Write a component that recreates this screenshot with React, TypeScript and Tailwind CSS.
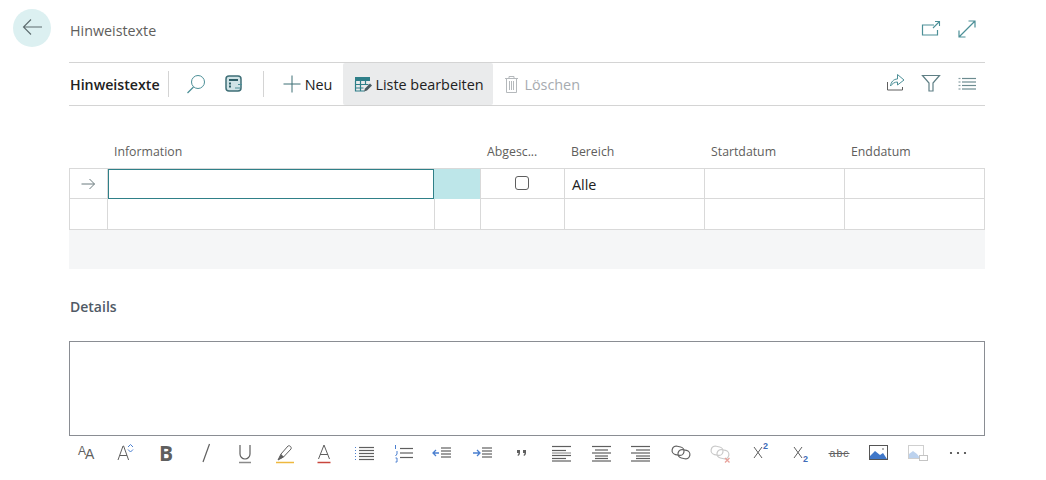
import type { ReactNode } from "react";

const teal = "#4c8f97";
const grey = "#5f5f5f";
const blue = "#4a7fd0";

function Ico({ w = 24, h = 24, children }: { w?: number; h?: number; children: ReactNode }) {
  return (
    <svg width={w} height={h} viewBox={`0 0 ${w} ${h}`} fill="none" strokeWidth="1" className="shrink-0">
      {children}
    </svg>
  );
}

function Lines({ x, w, ys, color = grey, width = 1.2 }: { x: number; w: number; ys: number[]; color?: string; width?: number }) {
  return (
    <>
      {ys.map((y) => (
        <path key={y} d={`M${x} ${y}h${w}`} stroke={color} strokeWidth={width} />
      ))}
    </>
  );
}

function LinkRings({ color }: { color: string }) {
  return (
    <>
      <rect x="3" y="5.500" width="12" height="8.500" rx="4.250" stroke={color} strokeWidth="1.200" transform="rotate(12 9 10)" />
      <rect x="9" y="9" width="12" height="8.500" rx="4.250" stroke={color} strokeWidth="1.200" transform="rotate(12 15 13)" />
    </>
  );
}

const editorIcons: ReactNode[] = [
  <Ico>
    <text x="3" y="14" fontSize="12" fontFamily="Liberation Sans, sans-serif" fill={grey}>A</text>
    <text x="10" y="18" fontSize="14" fontFamily="Liberation Sans, sans-serif" fill={grey}>A</text>
  </Ico>,
  <Ico>
    <path d="M4 19l5-14h.6l5 14M6 14.500h7" stroke={grey} />
    <path d="M14 6l2.500-2.500L19 6M14 8.500l2.500 2.500L19 8.500" stroke={blue} />
  </Ico>,
  <span className="text-[21px] font-bold leading-[24px] text-[#5f5f5f]">B</span>,
  <Ico>
    <path d="M15.500 3L9 21" stroke={grey} strokeWidth="1.200" />
  </Ico>,
  <Ico>
    <path d="M7 4v9a5 5 0 0 0 10 0V4" stroke={grey} strokeWidth="1.200" />
    <path d="M6 21.500h12" stroke="#8a8a8a" strokeWidth="1.500" />
  </Ico>,
  <Ico>
    <path d="M5 19l3-6 7-8c1.500-1 4 1 3 3l-7.500 8z" stroke={grey} />
    <path d="M5 19l3-6 3 3z" fill={grey} />
    <path d="M3 21.500h18" stroke="#eeb83f" strokeWidth="1.500" />
  </Ico>,
  <Ico>
    <path d="M6.500 18L12 4l5.500 14M8 13.500h8" stroke={grey} />
    <path d="M5.500 21.500h13" stroke="#c8463c" strokeWidth="1.500" />
  </Ico>,
  <Ico>
    <Lines x={7} w={15} ys={[6.500, 9.500, 12.500, 15.500, 18.500]} />
    <path d="M3.500 6v13" stroke={blue} strokeDasharray="1 2" />
  </Ico>,
  <Ico>
    <Lines x={8} w={13} ys={[7.500, 12, 16.500]} />
    <path d="M3.500 4v4M5 10v3l-1.500 2M3.500 17h1.500v4h-1.500" stroke={blue} />
  </Ico>,
  <Ico>
    <path d="M8 12H2M5 9l-3 3 3 3" stroke={blue} strokeWidth="1.300" />
    <Lines x={10} w={10} ys={[7, 10, 13, 16]} />
  </Ico>,
  <Ico>
    <path d="M2 12h6M6 9l3 3-3 3" stroke={blue} strokeWidth="1.300" />
    <Lines x={11} w={10} ys={[7, 10, 13, 16]} />
  </Ico>,
  <Ico>
    <path d="M7 9h3v3c0 1.500-1 2.500-2 3l-.500-1c.7-.5 1-1 1-2H7zM13 9h3v3c0 1.500-1 2.500-2 3l-.500-1c.7-.5 1-1 1-2h-1.500z" fill={grey} />
  </Ico>,
  <Ico>
    <Lines x={2} w={19} ys={[5.500, 14.500, 20]} />
    <Lines x={2} w={14} ys={[9.500, 17.500]} />
    <Lines x={2} w={19} ys={[12]} width={0.8} />
  </Ico>,
  <Ico>
    <Lines x={2} w={19} ys={[5.500, 12, 20]} />
    <Lines x={5} w={13} ys={[9, 15, 17.500]} />
  </Ico>,
  <Ico>
    <Lines x={2} w={19} ys={[5.500, 12, 20]} />
    <Lines x={7} w={14} ys={[9, 15, 17.500]} />
  </Ico>,
  <Ico>
    <LinkRings color={grey} />
  </Ico>,
  <Ico>
    <LinkRings color="#c9c9c9" />
    <path d="M17 17l4.500 4.500M21.500 17L17 21.500" stroke="#e8a29b" strokeWidth="1.300" />
  </Ico>,
  <Ico>
    <path d="M6 6l8 11M14 6L6 17" stroke={grey} />
    <text x="15" y="8" fontSize="9" fontWeight="700" fontFamily="Liberation Sans, sans-serif" fill="#3f6cb8">2</text>
  </Ico>,
  <Ico>
    <path d="M7 6l8 11M15 6L7 17" stroke={grey} />
    <text x="16" y="21" fontSize="9" fontWeight="700" fontFamily="Liberation Sans, sans-serif" fill="#3f6cb8">2</text>
  </Ico>,
  <Ico>
    <text x="2.500" y="16" fontSize="10.500" fontFamily="Liberation Sans, sans-serif" fill={grey} textLength="19">abc</text>
    <path d="M1.500 12.500h21" stroke={grey} />
  </Ico>,
  <Ico>
    <rect x="2.500" y="4.500" width="18" height="14" fill="#fff" stroke="#555" />
    <path d="M3 18v-3l5-5 5 4 3-2 4 6z" fill="#3f77c9" />
    <circle cx="16" cy="8" r="1" fill="#999" />
  </Ico>,
  <Ico>
    <rect x="2.500" y="4.500" width="15" height="13" fill="#fff" stroke="#cfcfcf" />
    <path d="M3 17v-4l4-3 4 3 3 4z" fill="#bcd2ee" />
    <rect x="13.500" y="14.500" width="8" height="5" fill="#fff" stroke="#c4c4c4" />
  </Ico>,
  <Ico>
    <circle cx="5" cy="12" r="1.100" fill="#3c3c3c" />
    <circle cx="12" cy="12" r="1.100" fill="#3c3c3c" />
    <circle cx="19" cy="12" r="1.100" fill="#3c3c3c" />
  </Ico>,
];

function Cell({ w, children, className = "" }: { w: string; children?: ReactNode; className?: string }) {
  return <div className={`flex shrink-0 items-center border-r border-[#d9d9d9] last:border-r-0 ${w} ${className}`}>{children}</div>;
}

export default function App() {
  return (
    <div className="flex h-[480px] w-[1046px] overflow-hidden bg-white font-['Open_Sans',sans-serif] text-[#212121]">
      <div className="w-[69px] shrink-0 pl-[13px] pt-[9px]">
        <div className="flex h-[38px] w-[38px] items-center justify-center rounded-full bg-[#dcf0f1] pb-[2px]">
          <Ico>
            <path d="M22 12H3.500M11 4.500L3.500 12l7.500 7.500" stroke="#5d6b6e" strokeWidth="1.100" />
          </Ico>
        </div>
      </div>

      <div className="w-[916px] shrink-0">
        <div className="flex h-[62px] items-start justify-between pt-[21px]">
          <span className="pl-px text-[14.3px] leading-[20px] text-[#605e5c]">Hinweistexte</span>
          <div className="mr-[6px] mt-[-4px] flex items-center gap-[12px]">
            <Ico>
              <path d="M15 8H3.500v10h15v-5" stroke={teal} strokeWidth="1.200" />
              <path d="M14 11l6-6M16 4.500h4.500V9" stroke={teal} strokeWidth="1.100" />
            </Ico>
            <Ico>
              <path d="M4 20L20 4M13.500 4H20v6.500M4 13.500V20h6.500" stroke={teal} strokeWidth="1.200" />
            </Ico>
          </div>
        </div>

        <div className="flex h-[44px] items-center border-y border-[#d4d4d4] text-[14.4px]">
          <span className="mt-[2px] pl-px text-[14.2px] font-semibold text-[#212121]">Hinweistexte</span>
          <div className="ml-[8px] h-[26px] w-px bg-[#d4d4d4]" />
          <div className="ml-[15px]">
            <Ico>
              <circle cx="14" cy="10" r="6.500" stroke={teal} />
              <path d="M9.500 15L3.500 21" stroke={teal} strokeWidth="1.200" />
            </Ico>
          </div>
          <div className="ml-[14px]">
            <Ico>
              <rect x="4" y="4" width="15" height="15" rx="3" stroke="#3f6f77" strokeWidth="1.500" fill="#cfe3e6" />
              <path d="M7 8h9M7 11.500h2M7 14.500h2" stroke="#2f5f68" strokeWidth="1.800" />
              <path d="M13 16h5M16 12.500h4" stroke={teal} />
            </Ico>
          </div>
          <div className="ml-[17px] h-[26px] w-px bg-[#d4d4d4]" />
          <div className="ml-[19px] flex items-center gap-[4px]">
            <Ico w={18} h={18}>
              <path d="M9 .5v17M.5 9h17" stroke="#3c6e74" />
            </Ico>
            <span className="mt-[2px]">Neu</span>
          </div>
          <div className="ml-[11px] flex h-[42px] w-[150px] items-center gap-[3px] rounded-[2px] bg-[#eaebec] pl-[11px]">
            <Ico w={18} h={18}>
              <path d="M1 2h15v4H1z" fill="#2f7f89" />
              <path d="M1.500 6v10h9M6.500 6v10M11.500 6v4M1.500 9.500h13M1.500 13h8" stroke="#2f7f89" strokeWidth="1.200" />
              <path d="M10 16.500l1-3 5-5 2 2-5 5z" fill="#4a5a60" />
            </Ico>
            <span className="mt-[2px] whitespace-nowrap">Liste bearbeiten</span>
          </div>
          <div className="ml-[10px] flex items-center gap-[4px] text-[#a6abb0]">
            <Ico w={17} h={20}>
              <path d="M2 4.500h13M6 4.500V2.500h5v2M3.500 4.500v14h10v-14M6.500 7v9M8.500 7v9M10.500 7v9" stroke="#b5b9bc" />
            </Ico>
            <span className="mt-[2px]">Löschen</span>
          </div>
          <div className="ml-auto mb-[2px] mr-[6px] flex items-center gap-[12px]">
            <Ico>
              <path d="M4.500 11v8h15v-3" stroke={grey} />
              <path d="M7.500 15c.5-4 3-7 7-7V3.500l6.500 5.500-6.500 5V11c-3 0-5 1.500-7 4z" stroke={teal} />
            </Ico>
            <Ico>
              <path d="M3.500 4.500h17L14 12v8h-4v-8z" stroke="#5f7f85" strokeWidth="1.200" />
            </Ico>
            <Ico>
              <Lines x={3.500} w={2} ys={[7.500, 11, 14.500, 18]} color="#8aa0a5" />
              <Lines x={7} w={14} ys={[7.500, 11, 14.500, 18]} color="#6c8b90" />
            </Ico>
          </div>
        </div>

        <div className="mt-[30px] flex h-[32px] items-center pl-[45px] text-[12.3px] text-[#605e5c]">
          <span className="w-[373px]">Information</span>
          <span className="w-[84px]">Abgesc...</span>
          <span className="w-[140px]">Bereich</span>
          <span className="w-[140px]">Startdatum</span>
          <span>Enddatum</span>
        </div>

        <div className="border border-[#d9d9d9]">
          <div className="flex h-[30px] border-b border-[#d9d9d9]">
            <Cell w="w-[38px]" className="justify-center">
              <Ico w={15} h={16}>
                <path d="M.5 8h13M8.500 3l5 5-5 5" stroke="#6b7b7e" />
              </Ico>
            </Cell>
            <div className="h-[30px] w-[326px] shrink-0 border border-[#2f8088]" />
            <div className="h-[30px] w-[47px] shrink-0 border-r border-[#d9d9d9] bg-[#bde6e9]" />
            <Cell w="w-[84px]" className="justify-center pr-[2px]">
              <div className="mb-[2px] h-[14px] w-[14px] rounded-[3px] border border-[#5f5f5f]" />
            </Cell>
            <Cell w="w-[140px]" className="pl-[7px] pt-[3px] text-[14.4px] text-[#212121]">Alle</Cell>
            <Cell w="w-[140px]" />
            <Cell w="w-[139px]" />
          </div>
          <div className="flex h-[30px]">
            <Cell w="w-[38px]" />
            <Cell w="w-[327px]" />
            <Cell w="w-[46px]" />
            <Cell w="w-[84px]" />
            <Cell w="w-[140px]" />
            <Cell w="w-[140px]" />
            <Cell w="w-[139px]" />
          </div>
        </div>

        <div className="h-[39px] bg-[#f5f6f7]" />

        <div className="mt-[28px] pl-px text-[14px] font-semibold leading-[20px] text-[#505a66]">Details</div>

        <div className="mt-[24px] h-[95px] border border-[#8a8d93]" />

        <div className="ml-[-2px] mt-[5px] flex">
          {editorIcons.map((icon, i) => (
            <div key={i} className="flex h-[24px] w-[39.6px] shrink-0 items-center justify-center">
              {icon}
            </div>
          ))}
        </div>
      </div>
    </div>
  );
}
